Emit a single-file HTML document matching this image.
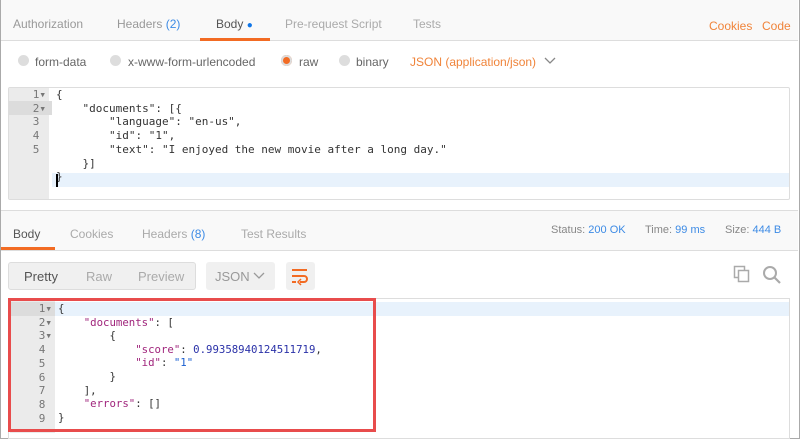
<!DOCTYPE html>
<html><head><style>
*{margin:0;padding:0;box-sizing:border-box}
body{width:800px;height:439px;overflow:hidden;background:#fff;font-family:"Liberation Sans",sans-serif;font-size:12px;color:#808080;position:relative}
.a{position:absolute;white-space:nowrap}
.mono{font-family:"DejaVu Sans Mono","Liberation Mono",monospace;font-size:11px;line-height:13.7px;color:#333}
.radio{position:absolute;width:11px;height:11px;border-radius:50%;background:#ddd;top:55px}
.ln{position:absolute;text-align:right;color:#777;font-family:"DejaVu Sans Mono",monospace;font-size:11px;line-height:13.7px}
.k{color:#a0257c}.s{color:#1a5fd1}.n{color:#2a31a8}
</style></head><body>
<div class="a" style="left:0;top:0;width:800px;height:439px;border:1px solid #aaa;border-top:none"></div>
<div class="a" style="left:1px;top:0;width:797px;height:41px;background:#f9f9f9;border-bottom:1px solid #ddd"></div>
<div class="a" style="left:13px;top:17px;color:#999">Authorization</div>
<div class="a" style="left:117px;top:17px;color:#999">Headers <span style="color:#3d8be5">(2)</span></div>
<div class="a" style="left:216px;top:17px;color:#555">Body <span style="color:#1076e8;font-size:10px">●</span></div>
<div class="a" style="left:200px;top:38px;width:70px;height:3px;background:#f26b23"></div>
<div class="a" style="left:285px;top:17px;color:#aaa">Pre-request Script</div>
<div class="a" style="left:413px;top:17px;color:#aaa">Tests</div>
<div class="a" style="left:709px;top:19px;color:#f0843a">Cookies</div>
<div class="a" style="left:762px;top:19px;color:#f0843a">Code</div>
<div class="radio" style="left:18px"></div><div class="a" style="left:35px;top:55px;color:#666">form-data</div>
<div class="radio" style="left:110px"></div><div class="a" style="left:128px;top:55px;color:#666">x-www-form-urlencoded</div>
<div class="radio" style="left:281px;background:#f26b23;box-shadow:0 0 0 2px #ddd inset"></div><div class="a" style="left:299px;top:55px;color:#666">raw</div>
<div class="radio" style="left:339px"></div><div class="a" style="left:356px;top:55px;color:#666">binary</div>
<div class="a" style="left:410px;top:55px;color:#f0843a">JSON (application/json)</div>
<svg class="a" style="left:544px;top:57px" width="12" height="8"><path d="M1 1L6 6L11 1" stroke="#888" fill="none" stroke-width="1.3"/></svg>
<div class="a" style="left:8px;top:87px;width:782px;height:113px;border:1px solid #ddd;border-radius:2px"></div>
<div class="a" style="left:9px;top:88px;width:40px;height:111px;background:#ebebeb"></div>
<div class="a" style="left:9px;top:101px;width:43px;height:14px;background:#dcdcdc"></div>
<div class="a" style="left:52px;top:173px;width:737px;height:14px;background:#e8f2fc"></div>
<div class="ln" style="left:9px;top:88px;width:37px">1▾<br>2▾<br>3&nbsp;<br>4&nbsp;<br>5&nbsp;</div>
<div class="a mono" style="left:56px;top:88px;white-space:pre">{
    "documents": [{
        "language": "en-us",
        "id": "1",
        "text": "I enjoyed the new movie after a long day."
    }]
}</div>
<div class="a" style="left:56px;top:174px;width:2px;height:13px;background:#000"></div>
<div class="a" style="left:1px;top:210px;width:797px;height:41px;background:#f9f9f9;border-top:1px solid #ddd;border-bottom:1px solid #ddd"></div>
<div class="a" style="left:13px;top:227px;color:#555">Body</div>
<div class="a" style="left:1px;top:247px;width:54px;height:3px;background:#f26b23"></div>
<div class="a" style="left:70px;top:227px;color:#aaa">Cookies</div>
<div class="a" style="left:142px;top:227px;color:#aaa">Headers <span style="color:#3d8be5">(8)</span></div>
<div class="a" style="left:241px;top:227px;color:#aaa">Test Results</div>
<div class="a" style="left:551px;top:224px;font-size:11px;color:#888">Status: <span style="color:#3d8be5">200 OK</span></div>
<div class="a" style="left:645px;top:224px;font-size:11px;color:#888">Time: <span style="color:#3d8be5">99 ms</span></div>
<div class="a" style="left:725px;top:224px;font-size:11px;color:#888">Size: <span style="color:#3d8be5">444 B</span></div>
<div class="a" style="left:8px;top:262px;width:188px;height:28px;background:#f0f0f0;border:1px solid #ddd;border-radius:3px"></div>
<div class="a" style="left:24px;top:269px;color:#555;font-size:13px">Pretty</div>
<div class="a" style="left:86px;top:269px;color:#aaa;font-size:13px">Raw</div>
<div class="a" style="left:138px;top:269px;color:#aaa;font-size:13px">Preview</div>
<div class="a" style="left:206px;top:262px;width:69px;height:28px;background:#f0f0f0;border-radius:3px"></div>
<div class="a" style="left:215px;top:269px;color:#999;font-size:13px">JSON</div>
<svg class="a" style="left:253px;top:272px" width="12" height="8"><path d="M1 1L6 6L11 1" stroke="#999" fill="none" stroke-width="1.3"/></svg>
<div class="a" style="left:286px;top:262px;width:29px;height:28px;background:#f0f0f0;border-radius:3px"></div>
<svg class="a" style="left:290px;top:266px" width="20" height="20"><path d="M2 4H17M2 10H14a3 3 0 0 1 0 6H10M2 16H6" stroke="#f26b23" fill="none" stroke-width="2"/><path d="M11 13L8 16L11 19" stroke="#f26b23" fill="none" stroke-width="1.5"/></svg>
<svg class="a" style="left:733px;top:265px" width="18" height="18"><rect x="1.5" y="1.5" width="10" height="11" fill="none" stroke="#aaa" stroke-width="1.5"/><rect x="5.5" y="5.5" width="10" height="11" fill="#fff" stroke="#aaa" stroke-width="1.5"/></svg>
<svg class="a" style="left:762px;top:265px" width="20" height="20"><circle cx="8" cy="8" r="6" fill="none" stroke="#aaa" stroke-width="2"/><path d="M12.5 12.5L18 18" stroke="#aaa" stroke-width="2.2"/></svg>
<div class="a" style="left:8px;top:298px;width:782px;height:141px;border:1px solid #ddd"></div>
<div class="a" style="left:10px;top:300px;width:45px;height:133px;background:#ebebeb"></div>
<div class="a" style="left:10px;top:302px;width:45px;height:14px;background:#dcdcdc"></div>
<div class="a" style="left:55px;top:302px;width:734px;height:14px;background:#e8f2fc"></div>
<div class="ln" style="left:10px;top:302px;width:42px">1▾<br>2▾<br>3▾<br>4&nbsp;<br>5&nbsp;<br>6&nbsp;<br>7&nbsp;<br>8&nbsp;<br>9&nbsp;</div>
<div class="a mono" style="left:58px;top:302px;white-space:pre;font-size:10.7px;line-height:13.6px">{
    <span class="k">"documents"</span>: [
        {
            <span class="k">"score"</span>: <span class="n">0.99358940124511719</span>,
            <span class="k">"id"</span>: <span class="s">"1"</span>
        }
    ],
    <span class="k">"errors"</span>: []
}</div>
<div class="a" style="left:8px;top:298px;width:368px;height:134px;border:3px solid #e84c4c"></div>
</body></html>
